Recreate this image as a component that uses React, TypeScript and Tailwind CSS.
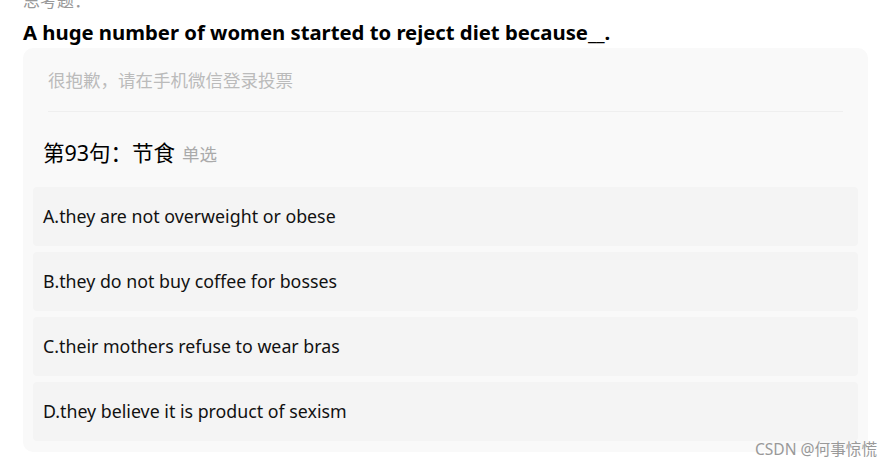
import React from "react";

const options = [
  "A.they are not overweight or obese",
  "B.they do not buy coffee for bosses",
  "C.their mothers refuse to wear bras",
  "D.they believe it is product of sexism",
];

function App() {
  return (
    <div
      className="relative h-[467px] w-[892px] overflow-hidden bg-white"
      style={{ fontFamily: '"Noto Sans", "Noto Sans CJK SC", sans-serif' }}
    >
      <div className="pl-[23px] pr-[24px]">
        <div className="-mt-[10px] h-[22px] text-[17px] leading-[22px] text-[#999]">思考题：</div>
        <h1 className="mt-[6px] h-[28px] text-[20.3px] font-bold leading-[28px] text-black">
          A huge number of women started to reject diet because__.
        </h1>
        <div className="mt-[2px] h-[404px] rounded-[10px] bg-[#f9f9f9] px-[10px] pt-[1px]">
          <div className="mx-[15px] border-b border-[#efefef] pb-[18px] pt-[19px] text-[17.5px] leading-[25px] text-[#bbb]">
            很抱歉，请在手机微信登录投票
          </div>
          <div className="flex items-baseline px-[10px] pt-[28px] pb-[20px] leading-[26px]">
            <span className="text-[21.5px] text-black">第93句：节食</span>
            <span className="ml-[7px] text-[17.5px] text-[#aaa]">单选</span>
          </div>
          <div className="flex flex-col gap-[6px]">
            {options.map((o) => (
              <div
                key={o}
                className="flex h-[59px] items-center rounded-[4px] bg-[#f4f4f4] px-[10px] text-[17.8px] text-[#111]"
              >
                {o}
              </div>
            ))}
          </div>
        </div>
      </div>
      <div className="absolute right-[15px] bottom-[6px] text-[15.6px] text-[#999]">CSDN @何事惊慌</div>
    </div>
  );
}

export default App;
